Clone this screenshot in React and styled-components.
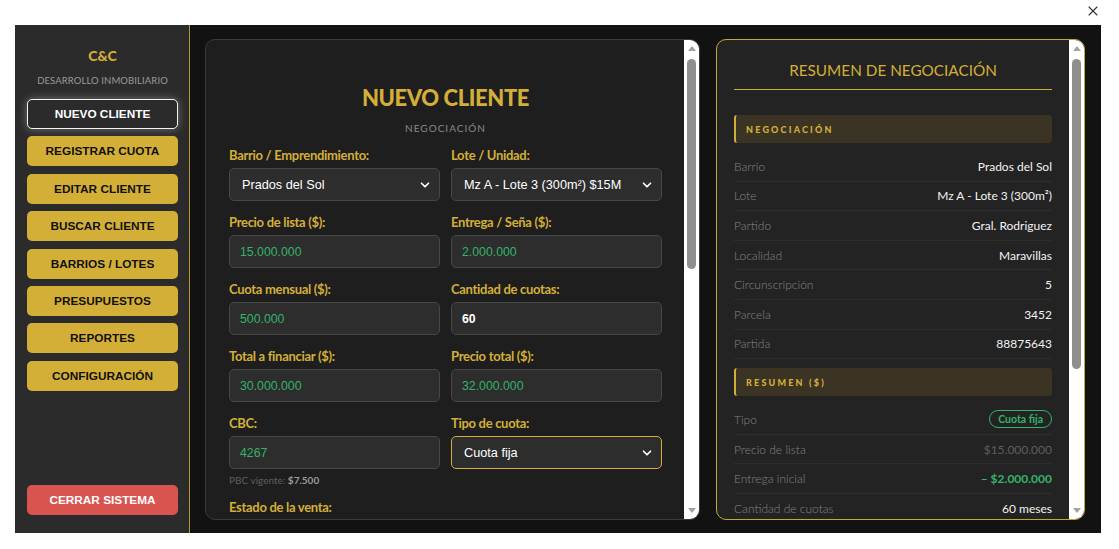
import React from "react";
import styled, { createGlobalStyle, css } from "styled-components";
import { ChevronDown, X } from "lucide-react";

const GOLD = "#d4af37";
const GREEN = "#34b36a";

const GlobalStyle = createGlobalStyle`
  * { box-sizing: border-box; }
  html, body { margin: 0; padding: 0; background: #ffffff; overflow: hidden; }
  body { font-family: "Lato", "Liberation Sans", sans-serif; }
`;

const Page = styled.div`
  width: 1119px;
  height: 549px;
  display: flex;
  flex-direction: column;
  padding: 0 18px 16px 15px;
`;

const TopBar = styled.div`
  height: 25px;
  flex-shrink: 0;
  display: flex;
  justify-content: flex-end;
  align-items: center;
  padding: 0 0 4px 0;
  color: #333;
`;

const Frame = styled.div`
  flex: 1;
  display: flex;
  background: #121212;
  min-height: 0;
`;

const Sidebar = styled.aside`
  width: 175px;
  flex-shrink: 0;
  background: #2b2b2b;
  border-right: 1px solid #b8962f;
  display: flex;
  flex-direction: column;
  padding: 22px 11px 18px 12px;
`;

const Brand = styled.div`
  text-align: center;
  color: ${GOLD};
  font-weight: 900;
  font-size: 14px;
  line-height: 17px;
`;

const BrandSub = styled.div`
  text-align: center;
  color: #9a9a9a;
  font-size: 9.5px;
  line-height: 12px;
  letter-spacing: 0.1px;
  margin: 11px 0 12px;
`;

const NavButton = styled.button`
  height: 30px;
  width: 100%;
  flex-shrink: 0;
  margin-bottom: 7.4px;
  border-radius: 5px;
  border: 1px solid transparent;
  background: ${GOLD};
  color: #111;
  font-family: "Liberation Sans", Arial, sans-serif;
  font-weight: 700;
  font-size: 11.8px;
  cursor: pointer;

  ${(p) =>
    p.$active &&
    css`
      background: #2b2b2b;
      color: #ffffff;
      border: 1.5px solid #f2f2f2;
      box-shadow: 0 0 8px rgba(255, 255, 255, 0.35);
    `}

  ${(p) =>
    p.$danger &&
    css`
      margin-top: auto;
      margin-bottom: 0;
      background: #d9534f;
      color: #ffffff;
    `}
`;

const Main = styled.main`
  flex: 1;
  min-width: 0;
  min-height: 0;
  display: grid;
  grid-template-columns: 495fr 369fr;
  grid-template-rows: minmax(0, 1fr);
  gap: 16px;
  padding: 14px 16px 13px 15px;
`;

const Panel = styled.section`
  display: flex;
  min-height: 0;
  overflow: hidden;
  border-radius: 10px;
  border: 1px solid ${(p) => (p.$gold ? "#c9a53a" : "#3a3a3a")};
  background: ${(p) => (p.$gold ? "#232323" : "#1e1e1e")};
`;

const PanelBody = styled.div`
  flex: 1;
  min-width: 0;
  overflow: hidden;
  padding: ${(p) => p.$pad};
`;

const ScrollTrack = styled.div`
  width: 15px;
  flex-shrink: 0;
  background: #ffffff;
  display: flex;
  flex-direction: column;
  align-items: center;
`;

const ScrollArrow = styled.div`
  height: 17px;
  flex-shrink: 0;
  display: flex;
  align-items: center;
  justify-content: center;

  &::before {
    content: "";
    width: 0;
    height: 0;
    border-left: 4px solid transparent;
    border-right: 4px solid transparent;
    ${(p) =>
      p.$down
        ? css`border-top: 5px solid #a3a3a3;`
        : css`border-bottom: 5px solid #a3a3a3;`}
  }
`;

const ScrollRail = styled.div`
  flex: 1;
  width: 100%;
  padding: 2px 3px 0;
`;

const ScrollThumb = styled.div`
  width: 9px;
  border-radius: 5px;
  background: #8f8f8f;
`;

const FakeScrollbar = ({ thumb }) => (
  <ScrollTrack>
    <ScrollArrow />
    <ScrollRail>
      <ScrollThumb style={{ height: thumb }} />
    </ScrollRail>
    <ScrollArrow $down />
  </ScrollTrack>
);

const Title = styled.h1`
  margin: 0;
  text-align: center;
  color: ${GOLD};
  font-size: 22px;
  line-height: 28px;
  font-weight: 900;
  letter-spacing: -0.4px;
`;

const Kicker = styled.div`
  text-align: center;
  color: #8a8a8a;
  font-size: 10px;
  line-height: 12px;
  letter-spacing: 1px;
  margin: 10px 0 13px;
`;

const FieldGrid = styled.div`
  display: grid;
  grid-template-columns: 1fr 1fr;
  column-gap: 11px;
  row-gap: 13px;
`;

const Field = styled.div`
  display: flex;
  flex-direction: column;
  grid-column: ${(p) => (p.$wide ? "1 / -1" : "auto")};
`;

const Label = styled.label`
  color: ${GOLD};
  font-weight: 700;
  font-size: 13px;
  line-height: 16px;
  letter-spacing: -0.3px;
  margin-bottom: 5px;
`;

const Input = styled.input`
  height: 33px;
  width: 100%;
  background: #2d2d2d;
  border: 1px solid #474747;
  border-radius: 5px;
  padding: 0 10px;
  color: ${(p) => (p.$plain ? "#ffffff" : GREEN)};
  font-family: "Liberation Sans", Arial, sans-serif;
  font-size: 12.3px;
  font-weight: ${(p) => (p.$plain ? 700 : 400)};
  outline: none;
`;

const SelectWrap = styled.div`
  position: relative;
  color: #ffffff;

  svg {
    position: absolute;
    right: 8px;
    top: 10px;
    pointer-events: none;
  }
`;

const Select = styled.select`
  appearance: none;
  height: 33px;
  width: 100%;
  background: #2d2d2d;
  border: 1px solid ${(p) => (p.$focus ? GOLD : "#474747")};
  border-radius: 5px;
  padding: 0 26px 0 12px;
  color: #ffffff;
  font-family: "Liberation Sans", Arial, sans-serif;
  font-size: 12.7px;
  outline: none;
`;

const Hint = styled.div`
  margin-top: 5px;
  font-size: 10px;
  line-height: 12px;
  color: #5f5f5f;

  b {
    color: #9a9a9a;
  }
`;

const SaveButton = styled.button`
  grid-column: 1 / -1;
  height: 38px;
  border: none;
  border-radius: 6px;
  background: ${GOLD};
  color: #111;
  font-family: "Liberation Sans", Arial, sans-serif;
  font-weight: 700;
  font-size: 14px;
`;

const SummaryTitle = styled.h2`
  margin: 0 0 25px;
  padding-bottom: 8px;
  border-bottom: 1px solid ${GOLD};
  text-align: center;
  color: ${GOLD};
  font-weight: 400;
  font-size: 15.3px;
  line-height: 22px;
`;

const SectionHead = styled.div`
  height: 28px;
  display: flex;
  align-items: center;
  padding-left: 10px;
  background: #3b3324;
  border-left: 2px solid ${GOLD};
  border-radius: 3px;
  color: ${GOLD};
  font-size: 9px;
  font-weight: 900;
  letter-spacing: 2.2px;
  margin: 9px 0;

  &:first-of-type {
    margin-top: 0;
  }
`;

const Row = styled.div`
  display: flex;
  justify-content: space-between;
  align-items: center;
  min-height: 29.6px;
  border-bottom: 1px solid #2d2d2d;
  font-size: 12px;
`;

const RowLabel = styled.span`
  color: #848484;
  font-weight: 300;
`;

const RowValue = styled.span`
  color: ${(p) => p.$color || "#f2f2f2"};
  font-weight: ${(p) => (p.$bold ? 700 : 400)};
`;

const Badge = styled.span`
  border: 1px solid ${GREEN};
  color: ${GREEN};
  border-radius: 10px;
  padding: 2px 8px;
  font-size: 10.5px;
  font-weight: 700;
  margin: 5px 0;
`;

const navItems = [
  "NUEVO CLIENTE",
  "REGISTRAR CUOTA",
  "EDITAR CLIENTE",
  "BUSCAR CLIENTE",
  "BARRIOS / LOTES",
  "PRESUPUESTOS",
  "REPORTES",
  "CONFIGURACIÓN",
];

const lotRows = [
  ["Barrio", "Prados del Sol"],
  ["Lote", "Mz A - Lote 3 (300m²)"],
  ["Partido", "Gral. Rodriguez"],
  ["Localidad", "Maravillas"],
  ["Circunscripción", "5"],
  ["Parcela", "3452"],
  ["Partida", "88875643"],
];

const Dropdown = ({ value, focus }) => (
  <SelectWrap>
    <Select $focus={focus} defaultValue={value}>
      <option>{value}</option>
    </Select>
    <ChevronDown size={14} strokeWidth={3} />
  </SelectWrap>
);

const App = () => {
  return (
    <>
      <GlobalStyle />
      <Page>
        <TopBar>
          <X size={16} strokeWidth={1.6} />
        </TopBar>
        <Frame>
          <Sidebar>
            <Brand>C&amp;C</Brand>
            <BrandSub>DESARROLLO INMOBILIARIO</BrandSub>
            {navItems.map((item, i) => (
              <NavButton key={item} $active={i === 0}>
                {item}
              </NavButton>
            ))}
            <NavButton $danger>CERRAR SISTEMA</NavButton>
          </Sidebar>

          <Main>
            <Panel>
              <PanelBody $pad="44px 22px 30px 23px">
                <Title>NUEVO CLIENTE</Title>
                <Kicker>NEGOCIACIÓN</Kicker>
                <FieldGrid>
                  <Field>
                    <Label>Barrio / Emprendimiento:</Label>
                    <Dropdown value="Prados del Sol" />
                  </Field>
                  <Field>
                    <Label>Lote / Unidad:</Label>
                    <Dropdown value="Mz A - Lote 3 (300m²) $15M" />
                  </Field>
                  <Field>
                    <Label>Precio de lista ($):</Label>
                    <Input defaultValue="15.000.000" />
                  </Field>
                  <Field>
                    <Label>Entrega / Seña ($):</Label>
                    <Input defaultValue="2.000.000" />
                  </Field>
                  <Field>
                    <Label>Cuota mensual ($):</Label>
                    <Input defaultValue="500.000" />
                  </Field>
                  <Field>
                    <Label>Cantidad de cuotas:</Label>
                    <Input $plain defaultValue="60" />
                  </Field>
                  <Field>
                    <Label>Total a financiar ($):</Label>
                    <Input defaultValue="30.000.000" />
                  </Field>
                  <Field>
                    <Label>Precio total ($):</Label>
                    <Input defaultValue="32.000.000" />
                  </Field>
                  <Field>
                    <Label>CBC:</Label>
                    <Input defaultValue="4267" />
                    <Hint>
                      PBC vigente: <b>$7.500</b>
                    </Hint>
                  </Field>
                  <Field>
                    <Label>Tipo de cuota:</Label>
                    <Dropdown value="Cuota fija" focus />
                  </Field>
                  <Field $wide>
                    <Label>Estado de la venta:</Label>
                    <Dropdown value="Reservado" />
                  </Field>
                  <Field>
                    <Label>Nombre y apellido:</Label>
                    <Input $plain defaultValue="" />
                  </Field>
                  <Field>
                    <Label>DNI / CUIT:</Label>
                    <Input $plain defaultValue="" />
                  </Field>
                  <SaveButton>GUARDAR CLIENTE</SaveButton>
                </FieldGrid>
              </PanelBody>
              <FakeScrollbar thumb={210} />
            </Panel>

            <Panel $gold>
              <PanelBody $pad="19px 17px 20px 17px">
                <SummaryTitle>RESUMEN DE NEGOCIACIÓN</SummaryTitle>
                <SectionHead>NEGOCIACIÓN</SectionHead>
                {lotRows.map(([k, v]) => (
                  <Row key={k}>
                    <RowLabel>{k}</RowLabel>
                    <RowValue>{v}</RowValue>
                  </Row>
                ))}
                <SectionHead>RESUMEN ($)</SectionHead>
                <Row>
                  <RowLabel>Tipo</RowLabel>
                  <Badge>Cuota fija</Badge>
                </Row>
                <Row>
                  <RowLabel>Precio de lista</RowLabel>
                  <RowValue $color="#5e5e5e">$15.000.000</RowValue>
                </Row>
                <Row>
                  <RowLabel>Entrega inicial</RowLabel>
                  <RowValue $color={GREEN} $bold>
                    – $2.000.000
                  </RowValue>
                </Row>
                <Row>
                  <RowLabel>Cantidad de cuotas</RowLabel>
                  <RowValue>60 meses</RowValue>
                </Row>
                <Row>
                  <RowLabel>Cuota mensual</RowLabel>
                  <RowValue>$500.000</RowValue>
                </Row>
              </PanelBody>
              <FakeScrollbar thumb={310} />
            </Panel>
          </Main>
        </Frame>
      </Page>
    </>
  );
};

export default App;
